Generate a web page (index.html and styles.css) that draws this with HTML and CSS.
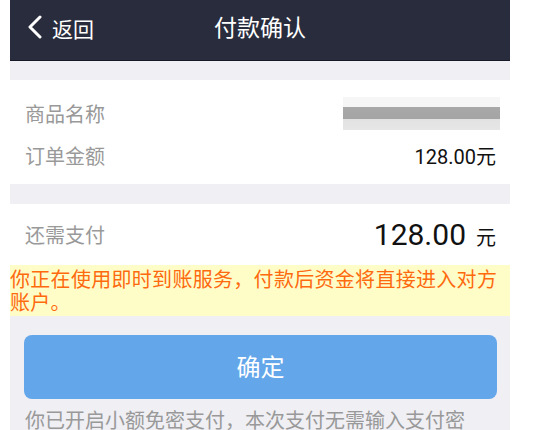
FILE: index.html
```html
<!DOCTYPE html>
<html>
<head>
  <title>付款确认</title>
  <meta charset="UTF-8">
  <meta name="viewport" content="width=device-width, initial-scale=1.0">
  <link rel="stylesheet" href="styles.css">
</head>
<body>
  <div class="page">
    <div class="header">
      <a class="back" href="#">
        <svg width="16" height="24" viewBox="0 0 16 24"><polyline points="13,2 3,12 13,22" fill="none" stroke="#fff" stroke-width="3" stroke-linecap="round" stroke-linejoin="round"/></svg>
        <span>返回</span>
      </a>
      <div class="title">付款确认</div>
    </div>

    <div class="section info">
      <div class="row">
        <span class="label">商品名称</span>
        <span class="blur"></span>
      </div>
      <div class="row">
        <span class="label">订单金额</span>
        <span class="value">128.00元</span>
      </div>
    </div>

    <div class="section pay">
      <div class="row">
        <span class="label">还需支付</span>
        <span class="amount">128.00<small>元</small></span>
      </div>
    </div>
    <div class="notice">你正在使用即时到账服务，付款后资金将直接进入对方账户。</div>

    <div class="actions">
      <button class="btn">确定</button>
      <p class="tip">你已开启小额免密支付，本次支付无需输入支付密码。</p>
    </div>
  </div>
</body>
</html>
```

FILE: styles.css
```css
body{
  margin:0;
  background:#fff;
  font-family:Roboto, "Noto Sans CJK SC", sans-serif;
}
.page{
  width:500px;
  margin-left:10px;
  min-height:430px;
  background:#efeff4;
}
.header{
  position:relative;
  height:60px;
  background:#282c3c;
  border-bottom:1px solid #161a28;
  display:flex;
  align-items:center;
  justify-content:center;
  margin-bottom:19px;
}
.back{
  position:absolute;
  left:17px;
  top:0;
  height:60px;
  display:flex;
  align-items:center;
  gap:9px;
  color:#fff;
  text-decoration:none;
  font-size:21px;
}
.back svg{
  margin-top:-6px;
}
.back span{
  margin-top:-5px;
}
.title{
  color:#fff;
  font-size:23px;
  margin-top:-8px;
}
.section{
  background:#fff;
}
.info{
  padding:12px 14px 8px 15px;
  margin-bottom:20px;
}
.row{
  height:42px;
  display:flex;
  align-items:center;
  justify-content:space-between;
}
.label{
  color:#999;
  font-size:20px;
}
.value{
  color:#111;
  font-size:20px;
}
.blur{
  width:157px;
  height:33px;
  margin-right:-4px;
  background:linear-gradient(#f6f6f6 0, #f6f6f6 30%, #a9a9a9 30%, #a4a4a4 67%, #e2e2e2 67%, #e6e6e6 100%);
}
.pay{
  padding:9px 14px 10px 15px;
}
.amount{
  color:#111;
  font-size:30px;
}
.amount small{
  font-size:20px;
  margin-left:10px;
}
.notice{
  background:#fefdc8;
  color:#ff6a0f;
  font-size:20px;
  letter-spacing:0.3px;
  line-height:23px;
  padding:4px 10px 1px 0;
}
.actions{
  padding:19px 13px 0 14px;
}
.btn{
  display:block;
  width:100%;
  height:64px;
  border:0;
  border-radius:8px;
  background:#64a6ea;
  color:#fff;
  font-family:inherit;
  font-size:24px;
  padding-bottom:4px;
}
.tip{
  margin:8px 0 0 1px;
  color:#999;
  font-size:20px;
  line-height:28px;
}
```
